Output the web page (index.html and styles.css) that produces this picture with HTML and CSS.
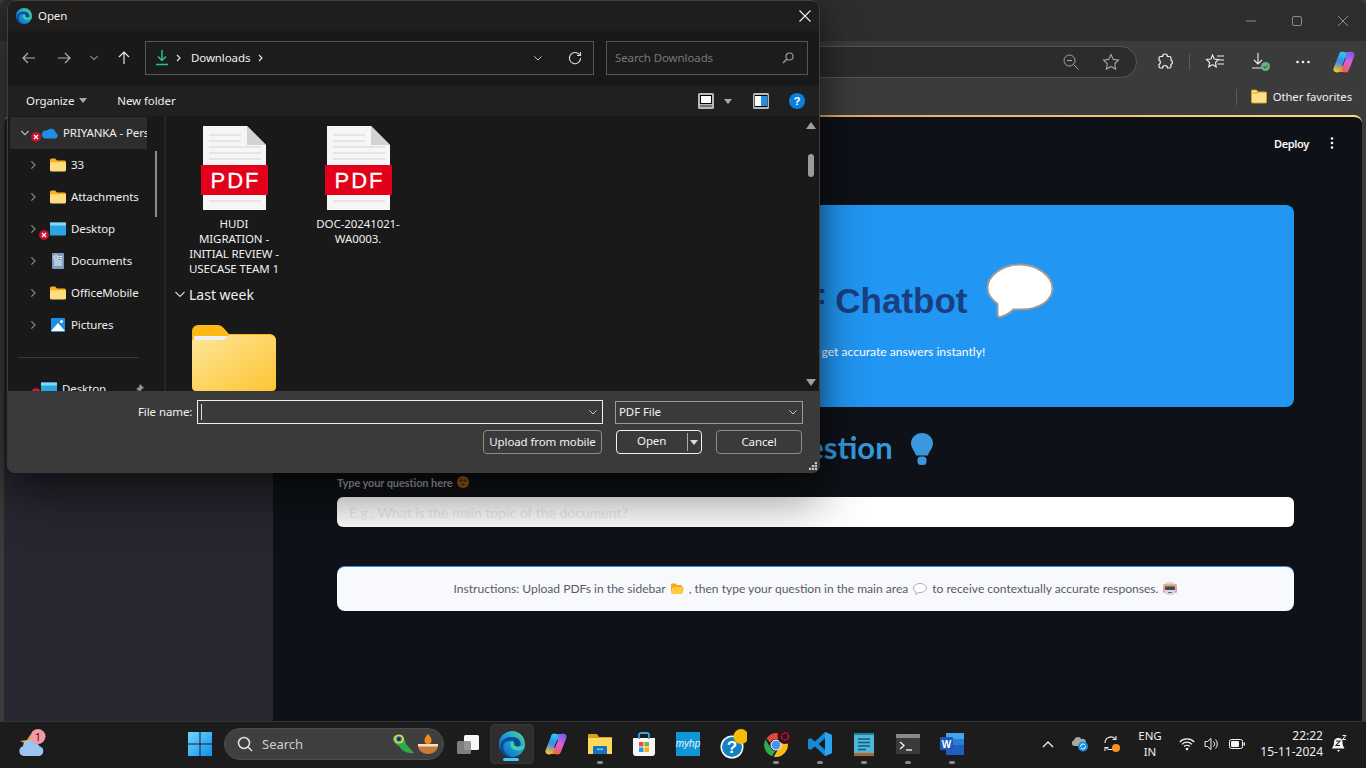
FILE: index.html
```html
<!DOCTYPE html>
<html lang="en">
<head>
<meta charset="utf-8">
<title>PDF Chatbot - Open dialog</title>
<link rel="stylesheet" href="styles.css">
</head>
<body>
<svg class="defs" width="0" height="0" aria-hidden="true">
  <defs>
    <linearGradient id="edgeA" x1="0" y1="1" x2="1" y2="0"><stop offset="0" stop-color="#0b63b8"/><stop offset=".55" stop-color="#1a9fe0"/><stop offset="1" stop-color="#5fdc72"/></linearGradient>
    <linearGradient id="copA" gradientUnits="userSpaceOnUse" x1="12" y1="2" x2="4" y2="20"><stop offset="0" stop-color="#27c8e6"/><stop offset=".5" stop-color="#3a8af0"/><stop offset="1" stop-color="#f4c02e"/></linearGradient>
    <linearGradient id="copB" gradientUnits="userSpaceOnUse" x1="20" y1="2" x2="12" y2="20"><stop offset="0" stop-color="#7a5ce8"/><stop offset=".5" stop-color="#d85fe0"/><stop offset="1" stop-color="#f0604a"/></linearGradient>
    <linearGradient id="bigF" x1="0" y1="0" x2="1" y2="1"><stop offset="0" stop-color="#ffe69a"/><stop offset="1" stop-color="#fcc532"/></linearGradient>
    <linearGradient id="winG" x1="0" y1="0" x2="1" y2="1"><stop offset="0" stop-color="#6fd8fb"/><stop offset="1" stop-color="#0f8ff0"/></linearGradient>
    <symbol id="edge" viewBox="0 0 24 24">
      <circle cx="12" cy="12" r="12" fill="url(#edgeA)"/>
      <path d="M1 14C2 8 7 5.500 12 5.500c5 0 8 3 8 6.300 0 2-2 3.200-4.200 3.200-1.600 0-2.500-.5-2.500-1 2-1.200 1.800-5-2.600-5C6 9 3.500 11 4 16c.5 3.500 3.500 7 8 8C6 24 1.500 20 1 14z" fill="#0a4a94"/>
      <path d="M24 12.500c0 3-2.500 5.300-6.500 5.300-3 0-6-1.300-6.800-4.300-.8-2.500 1.200-4.500 2.600-4.500-1 1.500-.5 5 4.200 5.500 3.500.3 6.500-1 6.500-2z" fill="#3fd59a"/>
    </symbol>
    <symbol id="copilot" viewBox="0 0 24 22">
      <path d="M10 4h9" stroke="#4f7ff0" stroke-width="6" stroke-linecap="round"/>
      <path d="M5 18h8" stroke="#f08a30" stroke-width="6" stroke-linecap="round"/>
      <path d="M10.500 4L5 18" stroke="url(#copA)" stroke-width="7" stroke-linecap="round"/>
      <path d="M19 4l-5.500 14" stroke="url(#copB)" stroke-width="7" stroke-linecap="round"/>
    </symbol>
    <symbol id="folder" viewBox="0 0 16 14">
      <path d="M0 2a1.500 1.500 0 0 1 1.500-1.500h3.800L7 2.500h7.500A1.500 1.500 0 0 1 16 4v2H0z" fill="#f6b419"/>
      <path d="M0 4.300h16V12a1.500 1.500 0 0 1-1.500 1.500h-13A1.500 1.500 0 0 1 0 12z" fill="#ffdc7c"/>
    </symbol>
    <symbol id="pdf" viewBox="0 0 67 84">
      <path d="M2 0h44l19 19v65H2z" fill="#f6f6f6"/>
      <path d="M46 0l19 19H46z" fill="#d2d2d2"/>
      <path d="M8 9h32M8 15h32M8 21h52M8 27h52M8 33h52M8 75h52" stroke="#d4d4d4" stroke-width="1"/>
      <rect x="0" y="39" width="67" height="30" fill="#e2001a"/>
      <text x="34.500" y="62" text-anchor="middle" class="pdf-text">PDF</text>
    </symbol>
    <symbol id="x-badge" viewBox="0 0 10 10">
      <circle cx="5" cy="5" r="5" fill="#c41230"/>
      <path d="M3 3l4 4M7 3l-4 4" stroke="#fff" stroke-width="1.200"/>
    </symbol>
    <symbol id="chev-r" viewBox="0 0 10 12"><path d="M3 1.500L7.500 6 3 10.500" fill="none" stroke="#8a8a8a" stroke-width="1.500"/></symbol>
    <symbol id="chev-d" viewBox="0 0 12 10"><path d="M1.500 3L6 7.500 10.500 3" fill="none" stroke="#cfcfcf" stroke-width="1.200"/></symbol>
    <symbol id="monitor" viewBox="0 0 16 14"><rect width="16" height="13" y=".5" rx="1" fill="#2ba5e0"/><rect width="16" height="3" y=".5" fill="#7fdaf5"/></symbol>
  </defs>
</svg>

<div class="desktop">
  <section class="browser">
    <div class="tabstrip">
      <span class="winctl"><svg width="12" height="12" viewBox="0 0 12 12"><path d="M1 6h10" stroke="#8c8c8c"/></svg></span>
      <span class="winctl"><svg width="12" height="12" viewBox="0 0 12 12"><rect x="1.500" y="1.500" width="9" height="9" rx="1.500" fill="none" stroke="#8c8c8c"/></svg></span>
      <span class="winctl"><svg width="12" height="12" viewBox="0 0 12 12"><path d="M1 1l10 10M11 1L1 11" stroke="#8c8c8c"/></svg></span>
    </div>
    <div class="toolbar">
      <div class="omnibox">
        <svg class="omni-icon" width="18" height="18" viewBox="0 0 18 18"><circle cx="7.500" cy="7.500" r="5.500" fill="none" stroke="#a5a5a5"/><path d="M5 7.500h5M11.500 11.500l5 5" stroke="#a5a5a5"/></svg>
        <svg class="omni-icon" width="18" height="18" viewBox="0 0 18 18"><path d="M9 1.500l2.300 4.900 5.200.7-3.800 3.700.9 5.300L9 13.500l-4.600 2.600.9-5.300L1.500 7.100l5.200-.7z" fill="none" stroke="#a5a5a5" stroke-width="1.100"/></svg>
      </div>
      <span class="tool tool-ext"><svg width="18" height="18" viewBox="0 0 18 18"><path d="M6.500 3.500a2.500 2.500 0 0 1 5 0h2a1.500 1.500 0 0 1 1.500 1.500v2a2.500 2.500 0 0 1 0 4.500v2a1.500 1.500 0 0 1-1.500 1.500h-2a2.500 2.500 0 0 0-5 0h-2A1.500 1.500 0 0 1 3 13.500v-2a2.500 2.500 0 0 0 0-4.500V5a1.500 1.500 0 0 1 1.500-1.500z" fill="none" stroke="#f2f2f2" stroke-width="1.200"/></svg></span>
      <span class="tool-sep"></span>
      <span class="tool tool-fav"><svg width="20" height="18" viewBox="0 0 20 18"><path d="M7.500 2l1.800 4 4.200.5-3 3 .7 4.300-3.700-2.200-3.700 2.200.8-4.300-3.100-3L6 6zM12 3h7M14 7h5M12.500 11H19" fill="none" stroke="#f0f0f0" stroke-width="1.100"/></svg></span>
      <span class="tool tool-dl"><svg width="22" height="20" viewBox="0 0 22 20"><path d="M8 1v11M4 8l4 4 4-4M2 16h12" fill="none" stroke="#f0f0f0" stroke-width="1.100"/><circle cx="15.500" cy="14.500" r="4.500" fill="#64b07c"/><path d="M13.500 14.500l1.500 1.500 2.500-2.500" fill="none" stroke="#244" stroke-width="1"/></svg></span>
      <span class="tool tool-more"><svg width="16" height="4" viewBox="0 0 16 4"><circle cx="2.500" cy="2" r="1.300" fill="#f0f0f0"/><circle cx="8" cy="2" r="1.300" fill="#f0f0f0"/><circle cx="13.500" cy="2" r="1.300" fill="#f0f0f0"/></svg></span>
      <span class="tool tool-copilot"><svg width="24" height="22"><use href="#copilot"/></svg></span>
    </div>
    <div class="favbar">
      <span class="fav-sep"></span>
      <svg class="fav-folder" width="16" height="15" viewBox="0 0 16 15"><path d="M.5 2A1 1 0 0 1 1.500 1h4L7 3h7.500a1 1 0 0 1 1 1v9a1 1 0 0 1-1 1h-13a1 1 0 0 1-1-1z" fill="#ffdf88" stroke="#cfa22a"/><path d="M.5 4h6L7 3" fill="none" stroke="#cfa22a"/></svg>
      <span class="fav-label">Other favorites</span>
    </div>
    <div class="page">
      <aside class="sidebar"></aside>
      <main class="main">
        <header class="app-header">
          <span class="deploy">Deploy</span>
          <svg width="4" height="12" viewBox="0 0 4 12"><circle cx="2" cy="1.500" r="1.300" fill="#fafafa"/><circle cx="2" cy="6" r="1.300" fill="#fafafa"/><circle cx="2" cy="10.500" r="1.300" fill="#fafafa"/></svg>
        </header>
        <div class="column">
          <div class="hero">
            <h1 class="hero-title">
              <span>Intelligent PDF Chatbot</span>
              <svg class="bubble" width="68" height="56" viewBox="0 0 68 56"><path d="M34 1.500c17 0 32.500 11 32.500 24 0 12-13 21-32 21-3 0-5 0-7 0-3 3-8 6-13 7.500-3 .5-3-2-3-4v-9C6 37 1.500 32 1.500 25 1.500 12 17 1.500 34 1.500z" fill="#fff" stroke="#9a9a9a" stroke-width="2"/></svg>
            </h1>
            <p class="hero-sub">Upload PDFs, ask questions, and get accurate answers instantly!</p>
          </div>
          <h2 class="ask">
            <span>Ask a Question</span>
            <svg width="22" height="32" viewBox="0 0 22 32"><path d="M11 0c6 0 11 4.500 11 10.500 0 5-4 7.500-5 12H5c-1-4.500-5-7-5-12C0 4.500 5 0 11 0z" fill="#3a97e0"/><rect x="6.500" y="23.500" width="9" height="8.500" rx="3.500" fill="#3a97e0"/></svg>
          </h2>
          <label class="q-label">Type your question here
            <svg class="emoji" width="12" height="12" viewBox="0 0 12 12"><circle cx="6" cy="6" r="6" fill="#a85d16"/><circle cx="4" cy="4.500" r="1.600" fill="#4a3a30"/><circle cx="8" cy="4.500" r="1.600" fill="#4a3a30"/><ellipse cx="6" cy="8.500" rx="1.500" ry="1.200" fill="#5c3010"/></svg>
          </label>
          <input class="q-input" type="text" placeholder="E.g., What is the main topic of the document?">
          <div class="instructions">
            <span>Instructions: Upload PDFs in the sidebar</span>
            <svg class="emoji" width="13" height="12" viewBox="0 0 13 12"><path d="M0 1.500A1 1 0 0 1 1 .5h3.500L6 2h4a1 1 0 0 1 1 1v1H2L0 10z" fill="#f2a91c"/><path d="M2 4h11l-1.500 7H0z" fill="#ffc93a"/></svg>
            <span>, then type your question in the main area</span>
            <svg class="emoji" width="14" height="12" viewBox="0 0 14 12"><path d="M7 .5c3.500 0 6.500 2 6.500 4.500S10.500 9.500 7 9.500H5.500L3 11.500V9C1.500 8.200.5 6.800.5 5 .5 2.500 3.500.5 7 .5z" fill="#fff" stroke="#a8a8a8"/></svg>
            <span>to receive contextually accurate responses.</span>
            <svg class="emoji" width="14" height="14" viewBox="0 0 14 14"><rect x="0" y="2" width="14" height="9" rx="1.500" fill="#e8a0a0"/><rect x="2" y="0" width="10" height="13" rx="3" fill="#d8d8e4"/><rect x="2" y="2.500" width="10" height="3" fill="#e5a23c"/><rect x="2" y="4.500" width="10" height="3.500" rx="1" fill="#3a4a60"/><rect x="5" y="10" width="4" height="1" fill="#667"/></svg>
          </div>
        </div>
      </main>
    </div>
  </section>

  <section class="dialog" aria-label="Open">
    <div class="dlg-title">
      <svg class="dlg-edge" width="16" height="16"><use href="#edge"/></svg>
      <span class="dlg-name">Open</span>
      <svg class="dlg-close" width="12" height="12" viewBox="0 0 12 12"><path d="M.5.500l11 11M11.500.500l-11 11" stroke="#f0f0f0" stroke-width="1.100"/></svg>
    </div>
    <div class="dlg-nav">
      <span class="nav-btn nb-back"><svg width="14" height="12" viewBox="0 0 14 12"><path d="M13 6H1M6 1L1 6l5 5" fill="none" stroke="#b0b0b0" stroke-width="1.200"/></svg></span>
      <span class="nav-btn nb-fwd"><svg width="14" height="12" viewBox="0 0 14 12"><path d="M1 6h12M8 1l5 5-5 5" fill="none" stroke="#b0b0b0" stroke-width="1.200"/></svg></span>
      <span class="nav-btn nb-hist"><svg width="10" height="8" viewBox="0 0 12 10"><path d="M1.500 2.500L6 7l4.500-4.500" fill="none" stroke="#a0a0a0" stroke-width="1.300"/></svg></span>
      <span class="nav-btn nb-up"><svg width="12" height="14" viewBox="0 0 12 14"><path d="M6 13V1M1 6l5-5 5 5" fill="none" stroke="#e8e8e8" stroke-width="1.200"/></svg></span>
      <div class="addr">
        <svg width="12" height="16" viewBox="0 0 12 16"><path d="M6 0v10M2 6.500L6 10.500l4-4M0 14.500h12" fill="none" stroke="#2dbb9c" stroke-width="1.500"/></svg>
        <svg class="crumb" width="6" height="8" viewBox="0 0 6 8"><path d="M1 1l3 3-3 3" fill="none" stroke="#e0e0e0" stroke-width="1.200"/></svg>
        <span class="addr-text">Downloads</span>
        <svg class="crumb" width="6" height="8" viewBox="0 0 6 8"><path d="M1 1l3 3-3 3" fill="none" stroke="#e0e0e0" stroke-width="1.200"/></svg>
        <svg class="addr-drop" width="10" height="8"><use href="#chev-d"/></svg>
        <svg class="addr-refresh" width="14" height="14" viewBox="0 0 14 14"><path d="M11.800 4.200A5.600 5.600 0 1 0 12.600 7M12.500 1v3.500H9" fill="none" stroke="#d8d8d8" stroke-width="1.100"/></svg>
      </div>
      <div class="searchbox">
        <span>Search Downloads</span>
        <svg width="12" height="12" viewBox="0 0 12 12"><circle cx="7.500" cy="4.500" r="3.500" fill="none" stroke="#9a9a9a" stroke-width="1.200"/><path d="M5 7l-4 4" stroke="#9a9a9a" stroke-width="1.500"/></svg>
      </div>
    </div>
    <div class="dlg-cmd">
      <span class="cmd-item">Organize <i class="caret"></i></span>
      <span class="cmd-item cmd-new">New folder</span>
      <span class="cmd-right">
        <svg width="16" height="16" viewBox="0 0 16 16"><rect width="16" height="16" rx="1.500" fill="#b8b8b8"/><rect x="2" y="2" width="12" height="9" fill="#000"/><rect x="3" y="3" width="10" height="7" fill="#fff"/><rect x="2" y="12.500" width="12" height="1" fill="#333"/></svg>
        <i class="caret"></i>
        <svg class="pane-ic" width="16" height="16" viewBox="0 0 16 16"><rect width="16" height="16" rx="1.500" fill="#b8b8b8"/><rect x="1.500" y="2" width="13" height="12" fill="#000"/><rect x="2" y="3" width="6" height="10" fill="#fff"/><rect x="8" y="3" width="6" height="10" fill="#1f8fe8"/></svg>
        <svg class="help-ic" width="16" height="16" viewBox="0 0 16 16"><circle cx="8" cy="8" r="8" fill="#0f7fdc"/><text x="8" y="12" text-anchor="middle" class="help-text">?</text></svg>
      </span>
    </div>
    <div class="dlg-body">
      <nav class="navpane">
        <div class="tree">
          <div class="row row-top selected">
            <svg class="tw" width="10" height="8" viewBox="0 0 12 10"><path d="M1.500 2.500L6 7l4.500-4.500" fill="none" stroke="#bbb" stroke-width="1.400"/></svg>
            <svg class="ic" width="17" height="12" viewBox="0 0 17 12"><path d="M4 11.500h10a3 3 0 0 0 .8-5.800A5 5 0 0 0 6 3.600 3.800 3.800 0 0 0 4 11.500z" fill="#1f8fe4"/></svg>
            <span>PRIYANKA - Personal</span>
            <svg class="badge" width="10" height="10"><use href="#x-badge"/></svg>
          </div>
          <div class="row"><svg class="tw" width="8" height="10"><use href="#chev-r"/></svg><svg class="ic" width="16" height="14"><use href="#folder"/></svg><span>33</span></div>
          <div class="row"><svg class="tw" width="8" height="10"><use href="#chev-r"/></svg><svg class="ic" width="16" height="14"><use href="#folder"/></svg><span>Attachments</span></div>
          <div class="row"><svg class="tw" width="8" height="10"><use href="#chev-r"/></svg><svg class="ic" width="16" height="14"><use href="#monitor"/></svg><span>Desktop</span><svg class="badge badge-l" width="10" height="10"><use href="#x-badge"/></svg></div>
          <div class="row"><svg class="tw" width="8" height="10"><use href="#chev-r"/></svg><svg class="ic" width="16" height="16" viewBox="0 0 16 16"><rect x="2" y="0" width="12" height="16" rx="1" fill="#7f9cc0"/><path d="M4 3h4v3H4zM9.500 3.500H12M9.500 5.500H12M4 8h8M4 10h8M4 12h8" stroke="#f0f4f8" fill="none"/></svg><span>Documents</span></div>
          <div class="row"><svg class="tw" width="8" height="10"><use href="#chev-r"/></svg><svg class="ic" width="16" height="14"><use href="#folder"/></svg><span>OfficeMobile</span></div>
          <div class="row"><svg class="tw" width="8" height="10"><use href="#chev-r"/></svg><svg class="ic" width="16" height="14" viewBox="0 0 16 14"><rect x="1" y="0" width="14" height="14" rx="1" fill="#1f8fe4"/><path d="M1 13l7-8 7 8z" fill="#fff"/><circle cx="11.500" cy="3.500" r="1.500" fill="#fff"/></svg><span>Pictures</span></div>
          <div class="tree-sep"></div>
          <div class="row row-top">
            <span class="tw-gap"></span>
            <svg class="ic" width="16" height="14"><use href="#monitor"/></svg>
            <span>Desktop</span>
            <svg class="pin" width="10" height="10" viewBox="0 0 10 10"><path d="M6 0l4 4-2 1-2 3-1-2-4 4 3-4-2-1 3-2z" fill="#909090"/></svg>
            <svg class="badge" width="10" height="10"><use href="#x-badge"/></svg>
          </div>
        </div>
        <div class="nav-scroll"><span></span></div>
      </nav>
      <div class="files">
        <div class="file-grid">
          <figure class="file"><svg width="67" height="84"><use href="#pdf"/></svg><figcaption>HUDI MIGRATION - INITIAL REVIEW - USECASE TEAM 1</figcaption></figure>
          <figure class="file"><svg width="67" height="84"><use href="#pdf"/></svg><figcaption>DOC-20241021-WA0003.</figcaption></figure>
        </div>
        <div class="group-head">
          <svg width="12" height="10"><use href="#chev-d"/></svg>
          <span>Last week</span>
        </div>
        <svg class="bigfolder" width="84" height="68" viewBox="0 0 84 68"><path d="M0 6a6 6 0 0 1 6-6h20a6 6 0 0 1 5 2.500L37 9h41a6 6 0 0 1 6 6v10H0z" fill="#fdb913"/><path d="M2 11h34l-3 5H2z" fill="#f0f0f0"/><path d="M0 15h32l5-5h41a6 6 0 0 1 6 6v46a4 4 0 0 1-4 4H4a4 4 0 0 1-4-4z" fill="url(#bigF)"/></svg>
      </div>
      <div class="file-scroll">
        <i class="arrow-up"></i>
        <span class="thumb"></span>
        <i class="arrow-down"></i>
      </div>
    </div>
    <div class="dlg-foot">
      <div class="foot-row">
        <span class="foot-label">File name:</span>
        <div class="combo combo-name"><i class="text-caret"></i><svg width="10" height="8"><use href="#chev-d"/></svg></div>
        <div class="combo combo-type"><span>PDF File</span><svg width="10" height="8"><use href="#chev-d"/></svg></div>
      </div>
      <div class="foot-row foot-btns">
        <span class="btn btn-upload">Upload from mobile</span>
        <span class="btn btn-open"><span class="open-label">Open</span><i class="open-split"></i><i class="caret open-caret"></i></span>
        <span class="btn btn-cancel">Cancel</span>
      </div>
      <svg class="grip" width="8" height="8" viewBox="0 0 11 11"><path d="M8 0h3v3H8zM4 4h3v3H4zM8 4h3v3H8zM0 8h3v3H0zM4 8h3v3H4zM8 8h3v3H8z" fill="#c8c8c8"/></svg>
    </div>
  </section>

  <footer class="taskbar">
    <span class="tb-item tb-weather">
      <svg width="28" height="30" viewBox="0 0 28 30"><path d="M2 12l7-1 3-5 5 3-4 8z" fill="#f2a322"/><path d="M6 27a5 5 0 0 1-1-9.800A7 7 0 0 1 18 14a5 5 0 0 1 3.500 3.200A5 5 0 0 1 21 27z" fill="#9cc4f2"/><circle cx="20" cy="7.500" r="7.500" fill="#f59aa5"/><text x="20" y="11.500" text-anchor="middle" class="badge-num">1</text></svg>
    </span>
    <span class="tb-item tb-start">
      <svg width="24" height="24" viewBox="0 0 24 24"><path d="M0 0h11.500v11.500H0zM12.500 0H24v11.500H12.500zM0 12.500h11.500V24H0zM12.500 12.500H24V24H12.500z" fill="url(#winG)"/></svg>
    </span>
    <div class="tb-search">
      <svg width="16" height="16" viewBox="0 0 16 16"><circle cx="7" cy="7" r="5.500" fill="none" stroke="#e4e4e4" stroke-width="1.500"/><path d="M11 11l4 4" stroke="#e4e4e4" stroke-width="1.500"/></svg>
      <span class="tb-search-text">Search</span>
      <svg class="tb-peacock" width="24" height="24" viewBox="0 0 24 24"><path d="M3 4c5-3 11 1 12 8l8 9c-7 1-12-2-15-7C4 12 0 8 3 4z" fill="#2da84a"/><ellipse cx="8" cy="7" rx="5" ry="4.500" fill="#e6d23c"/><circle cx="8" cy="7" r="2.800" fill="#1c5fb4"/><circle cx="8" cy="7" r="1.200" fill="#123"/></svg>
      <svg class="tb-diya" width="22" height="22" viewBox="0 0 22 22"><path d="M11 1c3 3 3.500 5 3.500 6.500a3.500 3.500 0 0 1-7 0C7.500 6 8 4 11 1z" fill="#f08a1c"/><path d="M1 12h20c0 5-4 9-10 9S1 17 1 12z" fill="#c87a3a"/><path d="M1 11h20v2.500H1z" fill="#f7e2b8"/></svg>
    </div>
    <span class="tb-item tb-first"><svg width="24" height="24" viewBox="0 0 24 24"><rect x="8" y="3" width="15" height="15" rx="1.500" fill="#f8f8f8"/><rect x="1" y="9" width="14" height="13" rx="1.500" fill="#8a8a8a" opacity=".9"/></svg></span>
    <span class="tb-item tb-active"><svg width="26" height="26"><use href="#edge"/></svg></span>
    <span class="tb-item"><svg width="24" height="22"><use href="#copilot"/></svg></span>
    <span class="tb-item running"><svg width="24" height="24" viewBox="0 0 24 24"><path d="M0 3a1 1 0 0 1 1-1h8l2 3h13v4H0z" fill="#d9a11c"/><path d="M0 6h24v16H0z" fill="#ffd95c"/><path d="M6 14h12a1 1 0 0 1 1 1v7H5v-7a1 1 0 0 1 1-1z" fill="#1672c4"/><rect x="9" y="16.500" width="6" height="1.500" fill="#7fc4f0"/></svg></span>
    <span class="tb-item"><svg width="24" height="24" viewBox="0 0 24 24"><path d="M1 6h22v15a3 3 0 0 1-3 3H4a3 3 0 0 1-3-3z" fill="#f6f6f6"/><path d="M7 7V3a2 2 0 0 1 2-2h6a2 2 0 0 1 2 2v4" fill="none" stroke="#3aa0e8" stroke-width="1.800"/><path d="M7 10h4.500v4.500H7z" fill="#e8502e"/><path d="M12.500 10H17v4.500h-4.500z" fill="#7cb82f"/><path d="M7 15.500h4.500V20H7z" fill="#1e9de8"/><path d="M12.500 15.500H17V20h-4.500z" fill="#f7b500"/></svg></span>
    <span class="tb-item"><span class="myhp">myhp</span></span>
    <span class="tb-item"><svg width="30" height="30" viewBox="0 0 30 30"><circle cx="15" cy="18" r="11.500" fill="#fff"/><circle cx="15" cy="18" r="10" fill="#1480c4"/><text x="15" y="24" text-anchor="middle" class="q-mark">?</text><circle cx="24" cy="7.500" r="7.500" fill="#f7bb0a"/></svg></span>
    <span class="tb-item running"><svg width="30" height="30" viewBox="0 0 30 30"><g transform="translate(3 0)"><path d="M12 4a12 12 0 0 1 10.400 6H12a6 6 0 0 0-5.600 3.800L2.600 9.500A12 12 0 0 1 12 4z" fill="#e8453c"/><path d="M1.500 10.500l6 9.500a6 6 0 0 0 4 2L8 27.300A12 12 0 0 1 1.500 10.500z" fill="#2da94f"/><path d="M22.800 11a12 12 0 0 1-13 16.800l5.200-8.800a6 6 0 0 0 0-8z" fill="#f9bc15"/><circle cx="12" cy="16" r="5" fill="#4a90f0" stroke="#fff" stroke-width="1"/><circle cx="21" cy="7.500" r="7.500" fill="#3d0d18"/><circle cx="21" cy="7.500" r="3.500" fill="none" stroke="#b03050" stroke-width="1.500" stroke-dasharray="1.500 1"/></g></svg></span>
    <span class="tb-item running"><svg width="24" height="24" viewBox="0 0 24 24"><path d="M17 0l7 3v18l-7 3-10-9.500L2.500 18 0 16.500V7.500L2.500 6 7 9.500zM17 6.500L11 12l6 5.500z" fill="#1a87d4"/><path d="M17 0l7 3v18l-7 3z" fill="#2aa5ee"/><path d="M17 6.500L11 12l6 5.500z" fill="#1c1c1c"/></svg></span>
    <span class="tb-item running"><svg width="20" height="24" viewBox="0 0 20 24"><rect y="1" width="20" height="21" fill="#4fb6d8"/><rect y="21" width="20" height="3" fill="#b5642a"/><path d="M0 1h20v2H0z" fill="#1d7fa8"/><path d="M4 7h12M4 10.500h12M4 14h12M4 17.500h8" stroke="#0f5c80" stroke-width="1.600"/></svg></span>
    <span class="tb-item running"><svg width="24" height="20" viewBox="0 0 24 20"><rect width="24" height="20" rx="1.500" fill="#3a3a3a"/><rect width="24" height="4" rx="1" fill="#8a8a8a"/><path d="M4 8l4 3.500L4 15" fill="none" stroke="#f0f0f0" stroke-width="1.400"/><path d="M10 16h6" stroke="#f0f0f0" stroke-width="1.400"/></svg></span>
    <span class="tb-item running"><svg width="24" height="22" viewBox="0 0 24 22"><path d="M6 0h18v22H6z" fill="#1e5fc0"/><path d="M6 0h18v6H6z" fill="#41a5ee"/><path d="M6 6h18v6H6z" fill="#2b7cd3"/><rect x="0" y="4" width="13" height="13" rx="1" fill="#185abd"/><text x="6.500" y="14.500" text-anchor="middle" class="w-mark">W</text></svg></span>

    <div class="tray">
      <span class="tray-item"><svg width="12" height="8" viewBox="0 0 12 8"><path d="M1 7l5-5 5 5" fill="none" stroke="#eee" stroke-width="1.400"/></svg></span>
      <span class="tray-item"><svg width="18" height="16" viewBox="0 0 18 16"><path d="M3 10a3 3 0 0 1 0-5.800 4 4 0 0 1 7.500-1A3 3 0 0 1 13 9v1z" fill="#a8a8a8"/><circle cx="12" cy="10.500" r="5" fill="#1f8fe4"/><path d="M9.500 10.500a2.500 2.500 0 0 1 4.500-1.500M14.500 10.500A2.500 2.500 0 0 1 10 12" fill="none" stroke="#fff"/></svg></span>
      <span class="tray-item"><svg width="18" height="18" viewBox="0 0 18 18"><path d="M2 8a6 6 0 0 1 10-4.500M13 1v3.500H9.500M10 14.500H6a5 5 0 0 1-3-2M2 16v-3.500h3.500" fill="none" stroke="#eee" stroke-width="1.100"/><circle cx="13" cy="13" r="4" fill="#f7931e"/></svg></span>
      <span class="tray-lang"><span>ENG</span><span>IN</span></span>
      <span class="tray-net tray-net-first"><svg width="16" height="14" viewBox="0 0 16 14"><path d="M.8 5a10 10 0 0 1 14.400 0M3 7.300a7 7 0 0 1 10 0M5.200 9.500a4 4 0 0 1 5.600 0" fill="none" stroke="#f2f2f2" stroke-width="1.200"/><circle cx="8" cy="12" r="1.300" fill="#f2f2f2"/></svg></span>
      <span class="tray-net"><svg width="16" height="14" viewBox="0 0 16 14"><path d="M1 4.500h2.500L7 1.500v11l-3.500-3H1zM9.500 4.500a3.500 3.500 0 0 1 0 5M11.500 2.500a6.500 6.500 0 0 1 0 9" fill="none" stroke="#f2f2f2" stroke-width="1"/></svg></span>
      <span class="tray-net"><svg width="16" height="10" viewBox="0 0 16 10"><rect x=".5" y=".5" width="13" height="9" rx="2" fill="none" stroke="#f2f2f2"/><rect x="2" y="2" width="8" height="6" rx="1" fill="#f2f2f2"/><rect x="14.500" y="3.500" width="1.500" height="3" fill="#f2f2f2"/></svg></span>
      <span class="clock"><span>22:22</span><span>15-11-2024</span></span>
      <span class="tray-bell"><svg width="15" height="17" viewBox="0 0 15 17"><path d="M6.500 3a4 4 0 0 1 4 4c0 4 1.500 5 2 6.500H0C.5 12 2 11 2 7a4 4 0 0 1 4.500-4z" fill="#f4f4f4"/><path d="M5 15h3l-1.500 2z" fill="#f4f4f4"/><path d="M4 6h4l-4 4.500h4" fill="none" stroke="#222" stroke-width="1.100"/><path d="M10.500.5H14L10.500 4.500H14" fill="none" stroke="#f4f4f4" stroke-width="1"/></svg></span>
    </div>
  </footer>
</div>
</body>
</html>
```

FILE: styles.css
```css
* { box-sizing: border-box; }
html, body { margin: 0; padding: 0; height: 100%; overflow: hidden; background: #1c1c1c; }
body { font-family: "Noto Sans", "Open Sans", sans-serif; font-size: 11.500px; letter-spacing: -.1px; color: #f2f2f2; }
.defs { position: absolute; }
svg { display: block; flex: none; }
.pdf-text { font: 400 22px "Liberation Sans", sans-serif; letter-spacing: 2px; fill: #fff; stroke: #fff; stroke-width: .3px; }
.help-text { font: 700 11px "Liberation Sans", sans-serif; fill: #fff; }
.badge-num { font: 400 11px "Noto Sans", sans-serif; fill: #3a1a1a; }
.q-mark { font: 700 17px "Liberation Sans", sans-serif; fill: #fff; }
.w-mark { font: 700 10px "Liberation Sans", sans-serif; fill: #fff; }

.desktop { position: relative; width: 1366px; height: 768px; display: flex; flex-direction: column; }

/* Browser window */
.browser { height: 721px; display: flex; flex-direction: column; background: #3b3b3b; }
.tabstrip { height: 41px; background: #2e2e2e; display: flex; justify-content: flex-end; align-items: center; border-radius: 8px 8px 0 0; }
.winctl { width: 46px; display: flex; justify-content: center; }
.toolbar { height: 41px; background: #3b3b3b; display: flex; align-items: center; }
.omnibox { margin-left: 260px; width: 877px; height: 32px; background: #2c2c2c; border: 1px solid #555; border-radius: 16px; display: flex; justify-content: flex-end; align-items: center; gap: 22px; padding-right: 16px; }
.tool { display: flex; justify-content: center; align-items: center; }
.tool-ext { margin-left: 19px; width: 18px; }
.tool-sep { width: 1px; height: 16px; background: #5a5a5a; margin-left: 15px; }
.tool-fav { margin-left: 15px; width: 20px; }
.tool-dl { margin-left: 25px; width: 22px; }
.tool-more { margin-left: 23px; width: 16px; }
.tool-copilot { margin-left: 21px; width: 24px; }
.favbar { height: 33px; background: #3b3b3b; display: flex; align-items: center; justify-content: flex-end; padding: 0 14px 4px 0; }
.fav-sep { width: 1px; height: 16px; background: #5a5a5a; margin-right: 14px; }
.fav-folder { margin-right: 6px; }
.fav-label { color: #f0f0f0; font-size: 11.300px; letter-spacing: -.05px; }
.page { flex: 1; margin: 0 4px; display: flex; min-height: 0; border-top: 2px solid transparent; background: linear-gradient(#0e1117, #0e1117) padding-box, linear-gradient(90deg, #e0805a, #e8a564 60%, #f7dc80) border-box; border-radius: 8px 8px 0 0; overflow: hidden; }
.sidebar { width: 269px; background: #262730; flex: none; }
.main { flex: 1; display: flex; flex-direction: column; min-width: 0; }
.app-header { height: 88px; display: flex; justify-content: flex-end; align-items: center; gap: 21px; padding: 0 28px 36px 0; }
.deploy { font: 600 11px "Noto Sans", sans-serif; letter-spacing: -.35px; color: #fafafa; }
.column { padding: 0 68px 0 64px; display: flex; flex-direction: column; }
.hero { height: 202px; background: #2196f3; border-radius: 8px; padding-top: 59px; display: flex; flex-direction: column; align-items: center; }
.hero-title { margin: 0; height: 58px; display: flex; align-items: center; gap: 19px; font: 700 35px "Liberation Sans", sans-serif; letter-spacing: 0; color: #1a3f80; }
.hero-title span { padding: 16px 0 0 4px; }
.bubble { margin-bottom: 4px; }
.hero-sub { margin: 22px 0 0; font: 500 12.100px "Lato", sans-serif; letter-spacing: 0; color: #f5f9ff; }
.ask { margin: 20px 0 0; height: 44px; display: flex; justify-content: center; align-items: center; gap: 18px; font: 700 31px "Lato", sans-serif; letter-spacing: 0; word-spacing: -8px; color: #3498db; }
.ask span { padding-bottom: 4px; }
.q-label { margin-top: 4px; height: 14px; display: flex; align-items: center; gap: 4px; font: 700 11px "Lato", sans-serif; letter-spacing: -.1px; color: #a0a0a0; }
.q-input { margin-top: 8px; height: 30px; border: 0; border-radius: 6px; background: #fff; padding: 0 12px; font: 400 14px "Lato", sans-serif; outline: none; }
.q-input::placeholder { color: #ececec; opacity: 1; }
.instructions { margin-top: 39px; height: 45px; padding-bottom: 1px; background: #f8f9fd; border-top: 1px solid #2196f3; border-radius: 8px; display: flex; justify-content: center; align-items: center; gap: 5px; font: 400 12.050px "Lato", sans-serif; letter-spacing: 0; color: #5a5a66; }

/* File dialog */
.dialog { position: absolute; left: 7px; top: 0; width: 813px; height: 473px; display: flex; flex-direction: column; background: #191919; border-radius: 8px; overflow: hidden; box-shadow: 0 26px 50px rgba(0,0,0,.45), 0 2px 21px rgba(0,0,0,.3); outline: 1px solid #3f3f3f; outline-offset: -1px; }
.dlg-title { height: 31px; background: #1f1e1d; display: flex; align-items: center; padding: 0 9px 0 9px; flex: none; }
.dlg-name { margin-left: 6px; color: #eee; }
.dlg-close { margin-left: auto; margin-right: 0; }
.dlg-nav { height: 55px; display: flex; align-items: center; flex: none; background: #191919; padding-bottom: 1px; }
.nav-btn { display: flex; justify-content: center; flex: none; }
.nb-back { width: 14px; margin-left: 15px; }
.nb-fwd { width: 14px; margin-left: 21px; }
.nb-hist { width: 10px; margin-left: 18px; }
.nb-up { width: 12px; margin-left: 19px; }
.addr { margin-left: 15px; width: 449px; height: 34px; border: 1px solid #565656; background: #1c1c1c; display: flex; align-items: center; padding-left: 10px; flex: none; }
.crumb { margin: 0 8px; }
.crumb:first-of-type { margin-left: 9px; }
.addr-text { color: #f0f0f0; margin: 0 0 2px 1px; }
.addr-drop { margin-left: auto; }
.addr-refresh { margin-left: 25px; margin-right: 11px; }
.searchbox { margin-left: 12px; width: 202px; height: 34px; border: 1px solid #565656; display: flex; align-items: center; justify-content: space-between; padding: 0 13px 0 8px; color: #777; background: #1c1c1c; flex: none; }
.searchbox span { padding-bottom: 2px; }
.dlg-cmd { height: 30px; background: #202020; display: flex; align-items: center; padding: 0 15px 0 19px; flex: none; }
.cmd-item { display: flex; align-items: center; gap: 5px; color: #eee; padding-bottom: 2px; }
.cmd-new { margin-left: 30px; }
.caret { display: block; width: 0; height: 0; border-left: 4.500px solid transparent; border-right: 4.500px solid transparent; border-top: 5px solid #aaa; }
.cmd-right { margin-left: auto; display: flex; align-items: center; gap: 10px; }
.pane-ic { margin-left: 11px; }
.help-ic { margin-left: 10px; }
.dlg-body { height: 275px; display: flex; flex: none; overflow: hidden; background: #191919; }
.navpane { width: 159px; display: flex; border-right: 2px solid #262626; flex: none; padding-left: 3px; }
.tree { width: 137px; overflow: hidden; flex: none; padding-top: 1px; }
.row { position: relative; height: 32px; display: flex; align-items: center; padding-left: 19px; white-space: nowrap; color: #eee; }
.row > span { padding-bottom: 2px; }
.row .tw { margin-right: 13px; }
.row .ic { margin-right: 5px; }
.row-top { padding-left: 10px; }
.row-top .tw { margin-right: 11px; }
.row-top .ic { margin-right: 5px; }
.tw-gap { width: 10px; margin-right: 11px; flex: none; }
.selected { background: #2d2d2d; }
.badge { position: absolute; left: 21px; top: 15px; }
.badge-l { left: 29px; top: 17px; }
.pin { position: absolute; left: 124px; top: 11px; }
.tree-sep { height: 1px; background: #3a3a3a; margin: 16px 8px 15px; }
.nav-scroll { width: 19px; padding: 35px 0 0 8px; flex: none; }
.nav-scroll span { display: block; width: 2px; height: 66px; background: #8a8a8a; }
.files { flex: 1; min-width: 0; overflow: hidden; padding: 10px 0 0 6px; }
.file-grid { display: flex; align-items: flex-start; height: 154px; }
.file { width: 124px; margin: 0; display: flex; flex-direction: column; align-items: center; flex: none; }
.file figcaption { margin-top: 6px; width: 92px; text-align: center; line-height: 15px; color: #f0f0f0; word-break: break-word; }
.group-head { margin-left: 2px; display: flex; align-items: center; gap: 3px; font-size: 14px; letter-spacing: 0; color: #eee; height: 24px; margin-top: 2px; }
.bigfolder { margin: 19px 0 0 20px; }
.file-scroll { width: 14px; position: relative; flex: none; margin-right: 2px; display: flex; flex-direction: column; align-items: center; padding: 6px 0 5px; }
.arrow-up { width: 0; height: 0; border-left: 5px solid transparent; border-right: 5px solid transparent; border-bottom: 7px solid #a0a0a0; }
.arrow-down { width: 0; height: 0; border-left: 5px solid transparent; border-right: 5px solid transparent; border-top: 7px solid #a0a0a0; margin-top: auto; }
.thumb { display: block; width: 6px; height: 23px; margin-top: 25px; background: #9a9a9a; border-radius: 3px; }
.dlg-foot { flex: 1; background: #3a3a3a; position: relative; padding-top: 9px; }
.foot-row { display: flex; align-items: center; }
.foot-label { margin-left: 131px; width: 54px; text-align: right; color: #f0f0f0; white-space: nowrap; padding-bottom: 2px; }
.combo { height: 24px; display: flex; align-items: center; justify-content: space-between; background: #3a3a3a; }
.combo-name { margin-left: 5px; width: 406px; border: 1px solid #f2f2f2; padding: 0 4px 0 3px; }
.text-caret { display: block; width: 1px; height: 16px; background: #ddd; }
.combo-type { margin-left: 12px; width: 188px; height: 23px; border: 1px solid #9a9a9a; padding: 0 4px 0 3px; color: #f2f2f2; }
.combo-type span { padding-bottom: 2px; }
.foot-btns { margin-top: 6px; padding-left: 476px; }
.btn { height: 24px; border: 1px solid #8c8c8c; border-radius: 4px; display: flex; align-items: center; justify-content: center; color: #f2f2f2; position: relative; flex: none; padding-bottom: 2px; }
.btn-upload { width: 119px; }
.btn-open { width: 86px; margin-left: 14px; border-color: #f2f2f2; }
.btn-cancel { width: 86px; margin-left: 14px; }
.open-label { position: absolute; left: 20px; top: 2px; }
.open-split { position: absolute; left: 70px; top: 2px; width: 1px; height: 18px; background: #aaa; }
.open-caret { position: absolute; left: 73px; top: 9px; border-top-color: #ddd; }
.grip { position: absolute; right: 3px; bottom: 3px; }

/* Taskbar */
.taskbar { flex: 1; background: #1c1c1c; border-top: 1px solid #333; display: flex; align-items: center; padding: 0 11px 3px 0; min-height: 0; letter-spacing: 0; }
.tb-item { position: relative; width: 44px; height: 40px; display: flex; justify-content: center; align-items: center; flex: none; }
.tb-weather { margin-left: 10px; }
.tb-start { margin-left: 124px; }
.tb-search { margin-left: 2px; width: 220px; height: 32px; border-radius: 16px; background: #3f3f3f; border: 1px solid #4e4e4e; display: flex; align-items: center; padding: 0 4px 0 12px; flex: none; }
.tb-search-text { margin-left: 9px; font-size: 13px; color: #cfcfcf; }
.tb-peacock { margin-left: auto; }
.tb-diya { margin-left: 2px; }
.tb-first { margin-left: 2px; }
.tb-active { background: #2e2e2e; border-radius: 4px; border: 1px solid #343434; }
.tb-active::after { content: ""; position: absolute; left: 12px; bottom: 2px; width: 16px; height: 3px; border-radius: 2px; background: #4cc2ff; }
.running::after { content: ""; position: absolute; left: 19px; bottom: 0; width: 6px; height: 3px; border-radius: 2px; background: #8a8a8a; }
.myhp { width: 24px; height: 24px; background: #0f96d6; display: flex; align-items: center; justify-content: center; font: italic 400 10px "Liberation Sans", sans-serif; color: #e8f6ff; }
.tray { margin-left: auto; display: flex; align-items: center; }
.tray-item { width: 32px; display: flex; justify-content: center; }
.tray-lang { width: 44px; display: flex; flex-direction: column; align-items: center; font-size: 11.500px; line-height: 16px; color: #eee; }
.tray-net { width: 25px; display: flex; justify-content: center; }
.tray-net-first { margin-left: 2px; }
.clock { width: 74px; display: flex; flex-direction: column; align-items: flex-end; font-size: 12px; line-height: 16px; color: #eee; }
.tray-bell { width: 32px; display: flex; justify-content: center; }
```
